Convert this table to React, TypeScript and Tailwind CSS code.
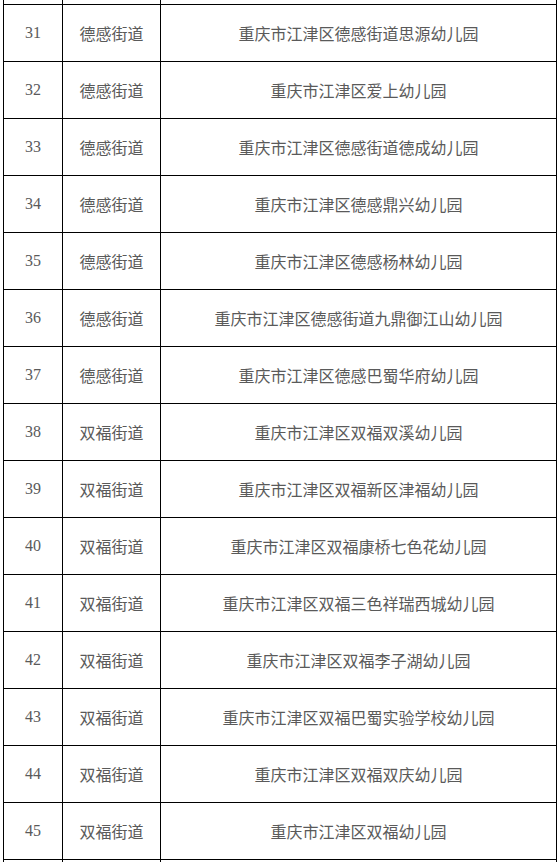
const rows: [number, string, string][] = [
  [31, "德感街道", "重庆市江津区德感街道思源幼儿园"],
  [32, "德感街道", "重庆市江津区爱上幼儿园"],
  [33, "德感街道", "重庆市江津区德感街道德成幼儿园"],
  [34, "德感街道", "重庆市江津区德感鼎兴幼儿园"],
  [35, "德感街道", "重庆市江津区德感杨林幼儿园"],
  [36, "德感街道", "重庆市江津区德感街道九鼎御江山幼儿园"],
  [37, "德感街道", "重庆市江津区德感巴蜀华府幼儿园"],
  [38, "双福街道", "重庆市江津区双福双溪幼儿园"],
  [39, "双福街道", "重庆市江津区双福新区津福幼儿园"],
  [40, "双福街道", "重庆市江津区双福康桥七色花幼儿园"],
  [41, "双福街道", "重庆市江津区双福三色祥瑞西城幼儿园"],
  [42, "双福街道", "重庆市江津区双福李子湖幼儿园"],
  [43, "双福街道", "重庆市江津区双福巴蜀实验学校幼儿园"],
  [44, "双福街道", "重庆市江津区双福双庆幼儿园"],
  [45, "双福街道", "重庆市江津区双福幼儿园"],
];

const cjk = "font-['Noto_Sans_CJK_SC',sans-serif]";

export default function App() {
  return (
    <div className="h-[862px] w-[560px] overflow-hidden bg-white">
      <table className="ml-[3px] mt-[-53px] w-[554px] table-fixed border-collapse text-[#5a5a5a]">
        <colgroup>
          <col className="w-[59px]" />
          <col className="w-[98px]" />
          <col />
        </colgroup>
        <tbody>
          <tr className="h-[57px]">
            <td className="border border-black" />
            <td className="border border-black" />
            <td className="border border-black" />
          </tr>
          {rows.map(([n, street, name]) => (
            <tr key={n} className="h-[57px]">
              <td className="border border-black p-0 text-center font-['Liberation_Serif',serif] text-[16px]">
                {n}
              </td>
              <td className={`border border-black p-0 text-center text-[16px] ${cjk}`}>
                {street}
              </td>
              <td className={`border border-black p-0 text-center text-[16px] ${cjk}`}>
                {name}
              </td>
            </tr>
          ))}
          <tr className="h-[57px]">
            <td className="border border-black" />
            <td className="border border-black" />
            <td className="border border-black" />
          </tr>
        </tbody>
      </table>
    </div>
  );
}
